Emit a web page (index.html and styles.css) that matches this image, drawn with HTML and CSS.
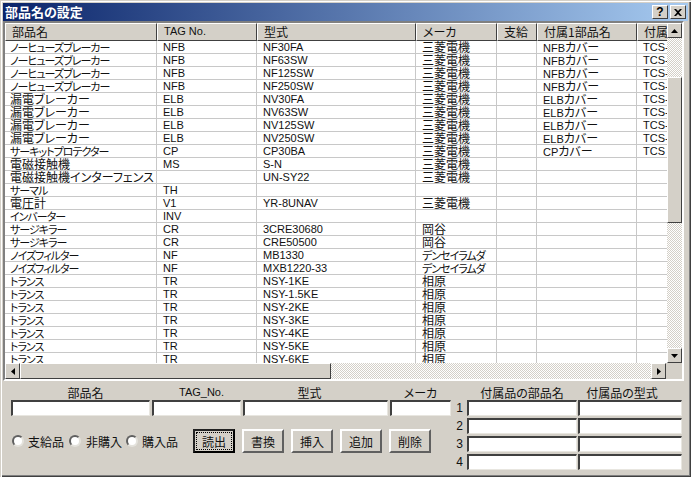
FILE: index.html
```html
<!DOCTYPE html>
<html lang="ja">
<head>
<meta charset="utf-8">
<title>部品名の設定</title>
<link rel="stylesheet" href="styles.css">
</head>
<body>
<div class="window">
  <div class="titlebar">
    <span class="title-text">部品名の設定</span>
    <span class="title-btn help">?</span>
    <span class="title-btn close"><svg width="8" height="7" viewBox="0 0 8 7"><path d="M0 0h2l2 2 2-2h2L5 3.500 8 7H6L4 5 2 7H0l3-3.500z" fill="#000"/></svg></span>
  </div>
  <div class="gridbox">
    <div class="grid-main">
      <div class="table-wrap">
        <table class="parts">
          <colgroup><col class="c1"><col class="c2"><col class="c3"><col class="c4"><col class="c5"><col class="c6"><col class="c7"></colgroup>
          <thead><tr><th>部品名</th><th class="lat">TAG No.</th><th>型式</th><th>メーカ</th><th>支給</th><th>付属1部品名</th><th>付属1型式</th></tr></thead>
          <tbody>
            <tr><td class="kana">ノーヒューズブレーカー</td><td class="lat">NFB</td><td class="lat">NF30FA</td><td>三菱電機</td><td></td><td><span class="lat">NFB</span>カバー</td><td class="lat">TCS-NF30</td></tr>
            <tr><td class="kana">ノーヒューズブレーカー</td><td class="lat">NFB</td><td class="lat">NF63SW</td><td>三菱電機</td><td></td><td><span class="lat">NFB</span>カバー</td><td class="lat">TCS-NF63</td></tr>
            <tr><td class="kana">ノーヒューズブレーカー</td><td class="lat">NFB</td><td class="lat">NF125SW</td><td>三菱電機</td><td></td><td><span class="lat">NFB</span>カバー</td><td class="lat">TCS-NF125</td></tr>
            <tr><td class="kana">ノーヒューズブレーカー</td><td class="lat">NFB</td><td class="lat">NF250SW</td><td>三菱電機</td><td></td><td><span class="lat">NFB</span>カバー</td><td class="lat">TCS-NF250</td></tr>
            <tr><td>漏電ブレーカー</td><td class="lat">ELB</td><td class="lat">NV30FA</td><td>三菱電機</td><td></td><td><span class="lat">ELB</span>カバー</td><td class="lat">TCS-NV30</td></tr>
            <tr><td>漏電ブレーカー</td><td class="lat">ELB</td><td class="lat">NV63SW</td><td>三菱電機</td><td></td><td><span class="lat">ELB</span>カバー</td><td class="lat">TCS-NV63</td></tr>
            <tr><td>漏電ブレーカー</td><td class="lat">ELB</td><td class="lat">NV125SW</td><td>三菱電機</td><td></td><td><span class="lat">ELB</span>カバー</td><td class="lat">TCS-NV125</td></tr>
            <tr><td>漏電ブレーカー</td><td class="lat">ELB</td><td class="lat">NV250SW</td><td>三菱電機</td><td></td><td><span class="lat">ELB</span>カバー</td><td class="lat">TCS-NV250</td></tr>
            <tr><td class="kana">サーキットプロテクター</td><td class="lat">CP</td><td class="lat">CP30BA</td><td>三菱電機</td><td></td><td><span class="lat">CP</span>カバー</td><td class="lat">TCS</td></tr>
            <tr><td>電磁接触機</td><td class="lat">MS</td><td class="lat">S-N</td><td>三菱電機</td><td></td><td></td><td></td></tr>
            <tr><td>電磁接触機インターフェンス</td><td></td><td class="lat">UN-SY22</td><td>三菱電機</td><td></td><td></td><td></td></tr>
            <tr><td class="kana">サーマル</td><td class="lat">TH</td><td></td><td></td><td></td><td></td><td></td></tr>
            <tr><td>電圧計</td><td class="lat">V1</td><td class="lat">YR-8UNAV</td><td>三菱電機</td><td></td><td></td><td></td></tr>
            <tr><td class="kana">インバーター</td><td class="lat">INV</td><td></td><td></td><td></td><td></td><td></td></tr>
            <tr><td class="kana">サージキラー</td><td class="lat">CR</td><td class="lat">3CRE30680</td><td>岡谷</td><td></td><td></td><td></td></tr>
            <tr><td class="kana">サージキラー</td><td class="lat">CR</td><td class="lat">CRE50500</td><td>岡谷</td><td></td><td></td><td></td></tr>
            <tr><td class="kana">ノイズフィルター</td><td class="lat">NF</td><td class="lat">MB1330</td><td class="kana">デンセイラムダ</td><td></td><td></td><td></td></tr>
            <tr><td class="kana">ノイズフィルター</td><td class="lat">NF</td><td class="lat">MXB1220-33</td><td class="kana">デンセイラムダ</td><td></td><td></td><td></td></tr>
            <tr><td class="kana">トランス</td><td class="lat">TR</td><td class="lat">NSY-1KE</td><td>相原</td><td></td><td></td><td></td></tr>
            <tr><td class="kana">トランス</td><td class="lat">TR</td><td class="lat">NSY-1.5KE</td><td>相原</td><td></td><td></td><td></td></tr>
            <tr><td class="kana">トランス</td><td class="lat">TR</td><td class="lat">NSY-2KE</td><td>相原</td><td></td><td></td><td></td></tr>
            <tr><td class="kana">トランス</td><td class="lat">TR</td><td class="lat">NSY-3KE</td><td>相原</td><td></td><td></td><td></td></tr>
            <tr><td class="kana">トランス</td><td class="lat">TR</td><td class="lat">NSY-4KE</td><td>相原</td><td></td><td></td><td></td></tr>
            <tr><td class="kana">トランス</td><td class="lat">TR</td><td class="lat">NSY-5KE</td><td>相原</td><td></td><td></td><td></td></tr>
            <tr><td class="kana">トランス</td><td class="lat">TR</td><td class="lat">NSY-6KE</td><td>相原</td><td></td><td></td><td></td></tr>
          </tbody>
        </table>
      </div>
      <div class="vscroll">
        <span class="sb-btn"><svg width="7" height="4" viewBox="0 0 7 4"><path d="M3.500 0L7 4H0z"/></svg></span>
        <span class="dither v-before"></span>
        <span class="thumb v-thumb"></span>
        <span class="dither grow"></span>
        <span class="sb-btn"><svg width="7" height="4" viewBox="0 0 7 4"><path d="M0 0h7L3.500 4z"/></svg></span>
      </div>
    </div>
    <div class="hscroll">
      <span class="sb-btn"><svg width="4" height="7" viewBox="0 0 4 7"><path d="M4 0v7L0 3.500z"/></svg></span>
      <span class="thumb h-thumb"></span>
      <span class="dither grow"></span>
      <span class="sb-btn"><svg width="4" height="7" viewBox="0 0 4 7"><path d="M0 0l4 3.500L0 7z"/></svg></span>
      <span class="corner"></span>
    </div>
  </div>
  <div class="form">
    <div class="form-left">
      <div class="fields">
        <label class="field f-name"><span class="caption shift-right">部品名</span><span class="input"></span></label>
        <label class="field f-tag"><span class="caption lat shift-right">TAG_No.</span><span class="input"></span></label>
        <label class="field f-model"><span class="caption shift-left">型式</span><span class="input"></span></label>
        <label class="field f-maker"><span class="caption">メーカ</span><span class="input"></span></label>
      </div>
      <div class="controls">
        <div class="radios">
          <span class="radio"><i class="dot"></i><span>支給品</span></span>
          <span class="radio"><i class="dot"></i><span>非購入</span></span>
          <span class="radio"><i class="dot"></i><span>購入品</span></span>
        </div>
        <div class="buttons">
          <span class="btn default"><span class="focus">読出</span></span>
          <span class="btn">書換</span>
          <span class="btn">挿入</span>
          <span class="btn">追加</span>
          <span class="btn">削除</span>
        </div>
      </div>
    </div>
    <div class="acc">
      <span></span><span class="caption">付属品の部品名</span><span class="caption shift-left-more">付属品の型式</span>
      <span class="num">1</span><span class="input"></span><span class="input"></span>
      <span class="num">2</span><span class="input"></span><span class="input"></span>
      <span class="num">3</span><span class="input"></span><span class="input"></span>
      <span class="num">4</span><span class="input"></span><span class="input"></span>
    </div>
  </div>
</div>
</body>
</html>
```
FILE: styles.css
```css
* { box-sizing: border-box; }
html, body { margin: 0; padding: 0; }
body {
  width: 691px;
  height: 477px;
  overflow: hidden;
  font-family: "Noto Sans CJK JP", "Liberation Sans", sans-serif;
  font-size: 12px;
  font-feature-settings: "palt";
  color: #111;
  background: #d4d0c8;
}
.lat { font-family: "Liberation Sans", "Noto Sans CJK JP", sans-serif; font-size: 11px; }
.window {
  width: 691px;
  height: 477px;
  display: flex;
  flex-direction: column;
  padding: 3px;
  background: #d4d0c8;
  box-shadow: inset 1px 1px 0 #d4d0c8, inset 2px 2px 0 #fff, inset -1px -1px 0 #404040, inset -2px -2px 0 #808080;
}
.titlebar {
  height: 18px;
  flex: none;
  display: flex;
  align-items: center;
  padding: 0 2px;
  background: linear-gradient(90deg, #0a246a, #a6caf0);
  color: #fff;
}
.title-text { font-size: 13px; font-weight: 700; line-height: 18px; flex: 1; }
.title-btn {
  width: 16px;
  height: 14px;
  background: #d4d0c8;
  border: 1px solid;
  border-color: #fff #404040 #404040 #fff;
  color: #000;
  display: flex;
  align-items: center;
  justify-content: center;
}
.help { font: 700 12px/12px "Liberation Sans", sans-serif; margin-right: 2px; }
.gridbox {
  width: 681px;
  height: 360px;
  flex: none;
  border: 2px solid;
  border-color: #808080 #fff #fff #808080;
  display: flex;
  flex-direction: column;
  background: #d4d0c8;
}
.grid-main { height: 340px; flex: none; display: flex; }
.table-wrap { width: 662px; height: 340px; overflow: hidden; background: #fff; flex: none; }
.parts { border-collapse: separate; border-spacing: 0; table-layout: fixed; width: 752px; }
.c1 { width: 152px; }
.c2 { width: 100px; }
.c3 { width: 159px; }
.c4 { width: 81px; }
.c5 { width: 40px; }
.c6 { width: 100px; }
.c7 { width: 120px; }
.parts th {
  height: 18px;
  padding: 0 0 1px 6px;
  text-align: left;
  font-weight: 400;
  background: #d4d0c8;
  border: 1px solid;
  border-color: #fff #404040 #404040 #fff;
  line-height: 15px;
  white-space: nowrap;
  overflow: hidden;
}
.parts td {
  height: 13px;
  padding: 0 0 0 5px;
  border-right: 1px solid #c8c8c8;
  border-bottom: 1px solid #c8c8c8;
  line-height: 12px;
  vertical-align: top;
  white-space: nowrap;
  overflow: hidden;
}
.parts td:nth-child(n+2) { padding-left: 6px; }
.parts td span { line-height: 10px; }
.parts td.kana { font-size: 11px; letter-spacing: -1px; }
.vscroll { width: 15px; display: flex; flex-direction: column; flex: none; }
.sb-btn {
  width: 15px;
  height: 15px;
  flex: none;
  background: #d4d0c8;
  border: 1px solid;
  border-color: #fff #404040 #404040 #fff;
  display: flex;
  align-items: center;
  justify-content: center;
}
.dither { background: repeating-conic-gradient(#fff 0 25%, #d4d0c8 0 50%) 0 0 / 2px 2px; }
.grow { flex: 1; }
.v-before { height: 39px; flex: none; }
.thumb {
  background: #d4d0c8;
  border: 1px solid;
  border-color: #fff #404040 #404040 #fff;
  flex: none;
}
.v-thumb { height: 146px; }
.hscroll { height: 16px; flex: none; display: flex; }
.hscroll .sb-btn { height: 16px; }
.h-thumb { width: 311px; }
.corner { width: 16px; flex: none; background: #d4d0c8; }
.form { flex: 1; display: flex; padding: 6px 3px 0 8px; gap: 4px; }
.form-left { width: 440px; flex: none; }
.fields { display: flex; gap: 2px; }
.field { display: flex; flex-direction: column; }
.f-name { width: 139px; }
.f-tag { width: 89px; }
.f-model { width: 145px; }
.f-maker { width: 61px; }
.caption { height: 13px; line-height: 11px; text-align: center; display: block; white-space: nowrap; }
.shift-right { padding-left: 10px; }
.shift-left { padding-right: 12px; }
.shift-left-more { padding-right: 16px; }
.input {
  display: block;
  height: 16px;
  background: #fff;
  border: 1px solid;
  border-color: #404040 #e8e6e0 #e8e6e0 #404040;
  border-top-width: 2px;
  border-left-width: 2px;
}
.controls { display: flex; margin-top: 13px; }
.radios { width: 182px; flex: none; display: flex; align-items: center; height: 24px; padding-left: 1px; }
.radio { display: flex; align-items: center; gap: 4px; width: 57px; }
.radio:nth-child(2) { gap: 5px; }
.dot {
  width: 12px;
  height: 12px;
  flex: none;
  border-radius: 50%;
  background: #fff;
  border: 2px solid #606060;
  border-right-color: #e4e2dc;
  border-bottom-color: #e4e2dc;
}
.buttons { display: flex; gap: 7px; }
.btn {
  width: 42px;
  height: 24px;
  background: #d4d0c8;
  border: 2px solid;
  border-color: #fff #606060 #606060 #fff;
  display: flex;
  align-items: center;
  justify-content: center;
}
.default { border-color: #222 #000 #000 #222; padding: 1px; }
.focus {
  width: 100%;
  height: 100%;
  display: flex;
  align-items: center;
  justify-content: center;
  border: 1px dotted #000;
}
.acc {
  display: grid;
  grid-template-columns: 11px 110px 104px;
  grid-template-rows: 11px repeat(4, 16px);
  column-gap: 1px;
  row-gap: 2px;
  width: 227px;
  flex: none;
}
.acc .caption { height: 11px; }
.num { text-align: right; padding-right: 3px; line-height: 16px; font-size: 12px; font-family: "Liberation Sans", sans-serif; }
```
